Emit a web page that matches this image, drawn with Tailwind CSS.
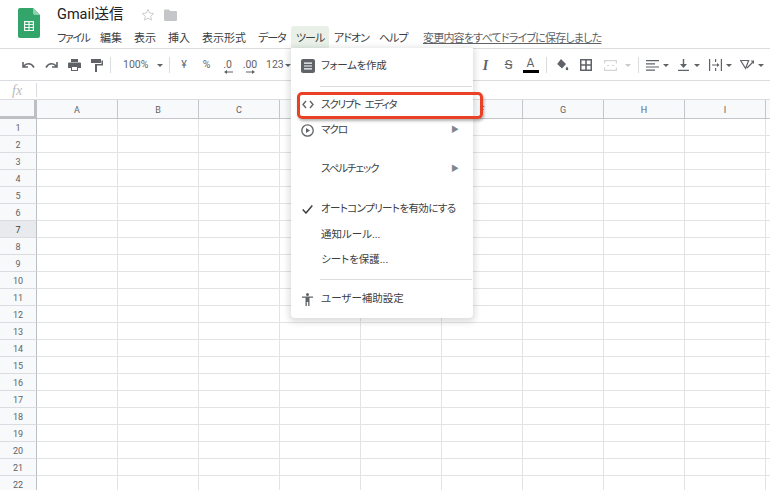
<!DOCTYPE html>
<html lang="ja">
<head>
    <meta charset="UTF-8" />
    <title>Gmail送信</title>
    <script src="https://cdn.jsdelivr.net/npm/@tailwindcss/browser@4"></script>
</head>
<body class="relative w-[770px] h-[490px] overflow-hidden bg-white text-[#3c4043] font-['Roboto','Noto_Sans_CJK_JP',sans-serif] [font-feature-settings:'palt']">

<!-- header -->
<div class="flex h-[49px] border-b border-[#dadce0]">
    <div class="w-[57px] pl-[18px] pt-[8px]">
        <svg width="22" height="30" viewBox="0 0 22 30">
            <path d="M2 0h13l7 7v21a2 2 0 0 1-2 2H2a2 2 0 0 1-2-2V2a2 2 0 0 1 2-2z" fill="#34a56a"/>
            <path d="M15 0l7 7h-5a2 2 0 0 1-2-2z" fill="#8fd0ad"/>
            <path d="M6 13h10v10H6z M7.2 14.2v1.900h3.200v-1.900z M11.6 14.2v1.900h3.200v-1.900z M7.2 17.1v1.900h3.200v-1.900z M11.6 17.1v1.900h3.200v-1.900z M7.2 20v1.900h3.200V20z M11.6 20v1.900h3.200V20z" fill="#f1f8f4" fill-rule="evenodd"/>
        </svg>
    </div>
    <div class="flex-1">
        <div class="flex items-center h-[28px] pt-[2px]">
            <span class="text-[14.5px] text-[#202124] w-[84px]">Gmail送信</span>
            <svg width="14" height="14" viewBox="0 0 24 24" fill="none" stroke="#c8cacc" stroke-width="1.6"><path d="M12 2.500l2.900 6.200 6.800.8-5 4.600 1.300 6.700-6-3.400-6 3.400 1.300-6.700-5-4.600 6.800-.8z"/></svg>
            <svg class="ml-[9px]" width="13" height="12" viewBox="0 0 13 12"><path d="M0 1.500A1 1 0 0 1 1 .5h4l1.200 1.500H12a1 1 0 0 1 1 1V11a1 1 0 0 1-1 1H1a1 1 0 0 1-1-1z" fill="#c4c6c9"/></svg>
        </div>
        <div class="flex h-[20px] text-[11px] leading-[20px] pt-[1px] text-[#3c4043]">
            <span class="w-[43px] tracking-[-1.4px]">ファイル</span>
            <span class="w-[34px]">編集</span>
            <span class="w-[34px]">表示</span>
            <span class="w-[34px]">挿入</span>
            <span class="w-[56px]">表示形式</span>
            <span class="w-[33px] tracking-[-1px]">データ</span>
            <span class="w-[38px] h-[23px] -mt-[3px] pt-[3px] pl-[5px] bg-[#e8f0e8] rounded-t-[3px] tracking-[-1px]">ツール</span>
            <span class="w-[50px] pl-[5px] tracking-[-1px]">アドオン</span>
            <span class="w-[44px] tracking-[-1px]">ヘルプ</span>
            <span class="underline text-[#5f6368] tracking-[-0.8px]">変更内容をすべてドライブに保存しました</span>
        </div>
    </div>
</div>

<!-- toolbar -->
<div class="flex items-center h-[32px] pl-[17px] pt-[1px] border-b border-[#dadce0] text-[10.5px] text-[#5f6368]">
    <span class="w-[23px] flex justify-center"><svg width="13" height="8" viewBox="0 0 13 8"><path d="M1 1v5h5M1.500 5.500C4 2 9 1.500 12 6.500" fill="none" stroke="#5f6368" stroke-width="1.600"/></svg></span>
    <span class="w-[23px] flex justify-center"><svg width="13" height="8" viewBox="0 0 13 8"><path d="M12 1v5H7M11.500 5.500C9 2 4 1.500 1 6.500" fill="none" stroke="#5f6368" stroke-width="1.600"/></svg></span>
    <span class="w-[22px] flex justify-center"><svg width="13" height="12" viewBox="0 0 13 12"><path d="M3 0h7v3H3zM1 3.500h11a1 1 0 0 1 1 1V9h-3v3H3V9H0V4.500a1 1 0 0 1 1-1z" fill="#5f6368"/><path d="M4 8h5v3H4z" fill="#fff"/></svg></span>
    <span class="w-[23px] flex justify-center"><svg width="12" height="13" viewBox="0 0 12 13"><path d="M0 0h10v4H0zM10.500 1.500H12v5H6v2H4V5h6.500zM4 8h2v5H4z" fill="#5f6368"/></svg></span>
    <span class="w-[1px] h-[16px] bg-[#dadce0] ml-[2px]"></span>
    <span class="w-[34px] ml-[12px]">100%</span>
    <span class="w-[12px]"><i class="block w-0 h-0 border-x-[3px] border-t-[3px] border-x-transparent border-t-[#5f6368]"></i></span>
    <span class="w-[1px] h-[16px] bg-[#dadce0]"></span>
    <span class="w-[22px] ml-[3px] text-center">¥</span>
    <span class="w-[23px] text-center">%</span>
    <span class="w-[19px] relative text-center">.0<svg class="absolute left-[6px] top-[13px]" width="9" height="4" viewBox="0 0 9 4"><path d="M0 2l3-2v1.500h6v1H3V4z" fill="#5f6368"/></svg></span>
    <span class="w-[26px] relative text-center">.00<svg class="absolute left-[9px] top-[13px]" width="9" height="4" viewBox="0 0 9 4"><path d="M9 2L6 0v1.500H0v1h6V4z" fill="#5f6368"/></svg></span>
    <span class="w-[19px] ml-[3px]">123</span>
    <span class="w-[6px]"><i class="block w-0 h-0 border-x-[3px] border-t-[3px] border-x-transparent border-t-[#5f6368]"></i></span>

    <span class="w-[23px] ml-[183px] text-center text-[14px] italic font-bold font-['Liberation_Serif',serif]">I</span>
    <span class="w-[23px] text-center text-[13px] line-through">S</span>
    <span class="w-[21px] flex flex-col items-center"><span class="text-[12px] leading-[12px]">A</span><span class="w-[16px] h-[3px] bg-black mt-[1px]"></span></span>
    <span class="w-[1px] h-[16px] ml-[5px] bg-[#dadce0]"></span>
    <span class="w-[30px] flex justify-center"><svg width="13" height="12" viewBox="0 0 13 12"><path d="M5 0l5 5-4 4.500L1.200 5zM11 7.500c.8 1.200 1.300 1.800 1.300 2.400a1.300 1.300 0 0 1-2.600 0c0-.6.500-1.200 1.300-2.400z" fill="#5f6368"/></svg></span>
    <span class="w-[18px] flex justify-center"><svg width="12" height="12" viewBox="0 0 12 12"><path d="M0 0h12v12H0z M1.500 1.500v3.700h3.700V1.500z M6.800 1.500v3.700h3.700V1.500z M1.500 6.800v3.700h3.700V6.800z M6.800 6.800v3.700h3.700V6.800z" fill="#5f6368" fill-rule="evenodd"/></svg></span>
    <span class="w-[30px] flex justify-center"><svg width="13" height="11" viewBox="0 0 13 11" fill="none" stroke="#d4d6d8" stroke-width="1.200"><path d="M.6 3.500V.6h11.800v2.900M.6 7.500v2.900h11.800V7.500M3 5.500h2M8 5.500h2"/></svg></span>
    <span class="w-[7px]"><i class="block w-0 h-0 border-x-[3px] border-t-[3px] border-x-transparent border-t-[#c8cacc]"></i></span>
    <span class="w-[1px] h-[16px] ml-[6px] bg-[#dadce0]"></span>
    <span class="w-[21px] ml-[3px] flex justify-center"><svg width="13" height="11" viewBox="0 0 13 11" fill="none" stroke="#5f6368" stroke-width="1.200"><path d="M0 .6h13M0 3.800h9M0 7h13M0 10.200h9"/></svg></span>
    <span class="w-[10px]"><i class="block w-0 h-0 border-x-[3px] border-t-[3px] border-x-transparent border-t-[#5f6368]"></i></span>
    <span class="w-[21px] flex justify-center"><svg width="11" height="12" viewBox="0 0 11 12"><path d="M0 10.800h11V12H0zM4.800 0h1.400v5H9L5.500 9 2 5h2.800z" fill="#5f6368"/></svg></span>
    <span class="w-[10px]"><i class="block w-0 h-0 border-x-[3px] border-t-[3px] border-x-transparent border-t-[#5f6368]"></i></span>
    <span class="w-[22px] flex justify-center"><svg width="13" height="12" viewBox="0 0 13 12"><path d="M0 0h1.200v12H0zM11.800 0H13v12h-1.200zM6 0h1.200v3H6zM6 9h1.200v3H6zM3 5.400h5V4l2.500 2L8 8V6.600H3z" fill="#5f6368"/></svg></span>
    <span class="w-[11px]"><i class="block w-0 h-0 border-x-[3px] border-t-[3px] border-x-transparent border-t-[#5f6368]"></i></span>
    <span class="w-[19px] flex justify-center"><svg width="14" height="12" viewBox="0 0 14 12" fill="none" stroke="#5f6368" stroke-width="1.200"><path d="M.6 1.500h8l-3 8zM7 9l6.500-6.500M11 2h3v3"/></svg></span>
    <span class="ml-[2px]"><i class="block w-0 h-0 border-x-[3px] border-t-[3px] border-x-transparent border-t-[#5f6368]"></i></span>
</div>

<!-- formula bar -->
<div class="flex items-center h-[19px] border-b border-[#dadce0]">
    <span class="w-[36px] pl-[12px] text-[14px] italic text-[#b8babc] font-['Liberation_Serif',serif]">fx</span>
    <span class="w-[1px] h-[14px] bg-[#dadce0]"></span>
</div>

<!-- sheet grid, filled in below -->
<div id="sheet" class="grid grid-cols-[37px_repeat(9,81px)_5px] grid-rows-[19px] auto-rows-[17px] text-[9px] text-[#5f6368]"></div>

<!-- tools menu -->
<div class="absolute left-[291px] top-[48px] w-[182px] h-[270px] bg-white rounded-b-[4px] shadow-[0_2px_6px_2px_rgba(60,64,67,0.18)] text-[10.5px] text-[#3c4043]">
    <div class="flex items-center h-[35px]">
        <span class="w-[30px] flex justify-center pl-[3px]"><svg width="14" height="14" viewBox="0 0 14 14"><rect width="14" height="14" rx="2" fill="#5f6368"/><path d="M3 3.500h8v1.200H3zM3 6.400h8v1.200H3zM3 9.300h8v1.200H3z" fill="#fff"/></svg></span>
        <span class="tracking-[-0.3px]">フォームを作成</span>
    </div>
    <div class="ml-[29px] mr-[1px] h-[1px] mt-[3px] bg-[#dadce0]"></div>
    <div class="flex items-center h-[25px] mt-[5px]">
        <span class="w-[30px] flex justify-center pl-[3px]"><svg width="12" height="9" viewBox="0 0 12 9" fill="none" stroke="#5f6368" stroke-width="1.400"><path d="M4 1L1 4.500 4 8M8 1l3 3.500L8 8"/></svg></span>
        <span class="tracking-[-1.2px] [word-spacing:3px]">スクリプト エディタ</span>
    </div>
    <div class="flex items-center h-[26px]">
        <span class="w-[30px] flex justify-center pl-[3px]"><svg width="13" height="13" viewBox="0 0 13 13"><circle cx="6.500" cy="6.500" r="5.700" fill="none" stroke="#5f6368" stroke-width="1.300"/><path d="M5 4l4 2.500L5 9z" fill="#5f6368"/></svg></span>
        <span class="flex-1 tracking-[-1px]">マクロ</span>
        <span class="w-[22px] text-[8px] text-[#80868b]">▶</span>
    </div>
    <div class="flex items-center h-[26px] mt-[13px]">
        <span class="w-[30px]"></span>
        <span class="flex-1 tracking-[-1.1px]">スペルチェック</span>
        <span class="w-[22px] text-[8px] text-[#80868b]">▶</span>
    </div>
    <div class="flex items-center h-[26px] mt-[14px]">
        <span class="w-[30px] flex justify-center pl-[3px]"><svg width="11" height="9" viewBox="0 0 11 9" fill="none" stroke="#3c4043" stroke-width="1.500"><path d="M.7 4.500L4 8l6.300-7.500"/></svg></span>
        <span class="tracking-[-0.6px]">オートコンプリートを有効にする</span>
    </div>
    <div class="flex items-center h-[25px]"><span class="w-[30px]"></span><span>通知ルール...</span></div>
    <div class="flex items-center h-[26px]"><span class="w-[30px]"></span><span>シートを保護...</span></div>
    <div class="ml-[29px] mr-[1px] h-[1px] mt-[6px] bg-[#dadce0]"></div>
    <div class="flex items-center h-[26px] mt-[6px]">
        <span class="w-[30px] flex justify-center pl-[3px]"><svg width="11" height="13" viewBox="0 0 11 13"><circle cx="5.500" cy="1.600" r="1.500" fill="#5f6368"/><path d="M0 3.500h11v1.200H7.500V13H6.200V9H4.800v4H3.500V4.700H0z" fill="#5f6368"/></svg></span>
        <span>ユーザー補助設定</span>
    </div>
</div>

<!-- red highlight around script editor -->
<div class="absolute left-[297px] top-[92px] w-[186px] h-[27px] border-[3px] border-[#ea4025] rounded-[5px] shadow-[1px_2px_3px_rgba(0,0,0,0.3)]"></div>

<script>
    // 22 rows + header, class names are fixed strings so the stylesheet has them
    var sheet = document.getElementById('sheet');
    var cols = ['A', 'B', 'C', 'D', 'E', 'F', 'G', 'H', 'I', ''];
    var html = '<div class="bg-[#f8f9fa] border-r-[3px] border-b-[3px] border-[#bdbfc2]"></div>';
    cols.forEach(function (c) {
        html += '<div class="flex items-center justify-center pt-[3px] bg-[#f8f9fa] border-r border-b border-[#c4c6c9]">' + c + '</div>';
    });
    for (var r = 1; r <= 22; r++) {
        var head = r === 7
            ? 'bg-[#e8eaed] text-[#3c4043]'
            : 'bg-[#f8f9fa]';
        html += '<div class="flex items-center justify-center pt-[3px] border-r border-b border-r-[#bdbfc2] border-b-[#dadce0] ' + head + '">' + r + '</div>';
        for (var c = 0; c < 10; c++) {
            html += '<div class="border-r border-b border-[#e2e3e5]"></div>';
        }
    }
    sheet.innerHTML = html;
</script>
</body>
</html>
